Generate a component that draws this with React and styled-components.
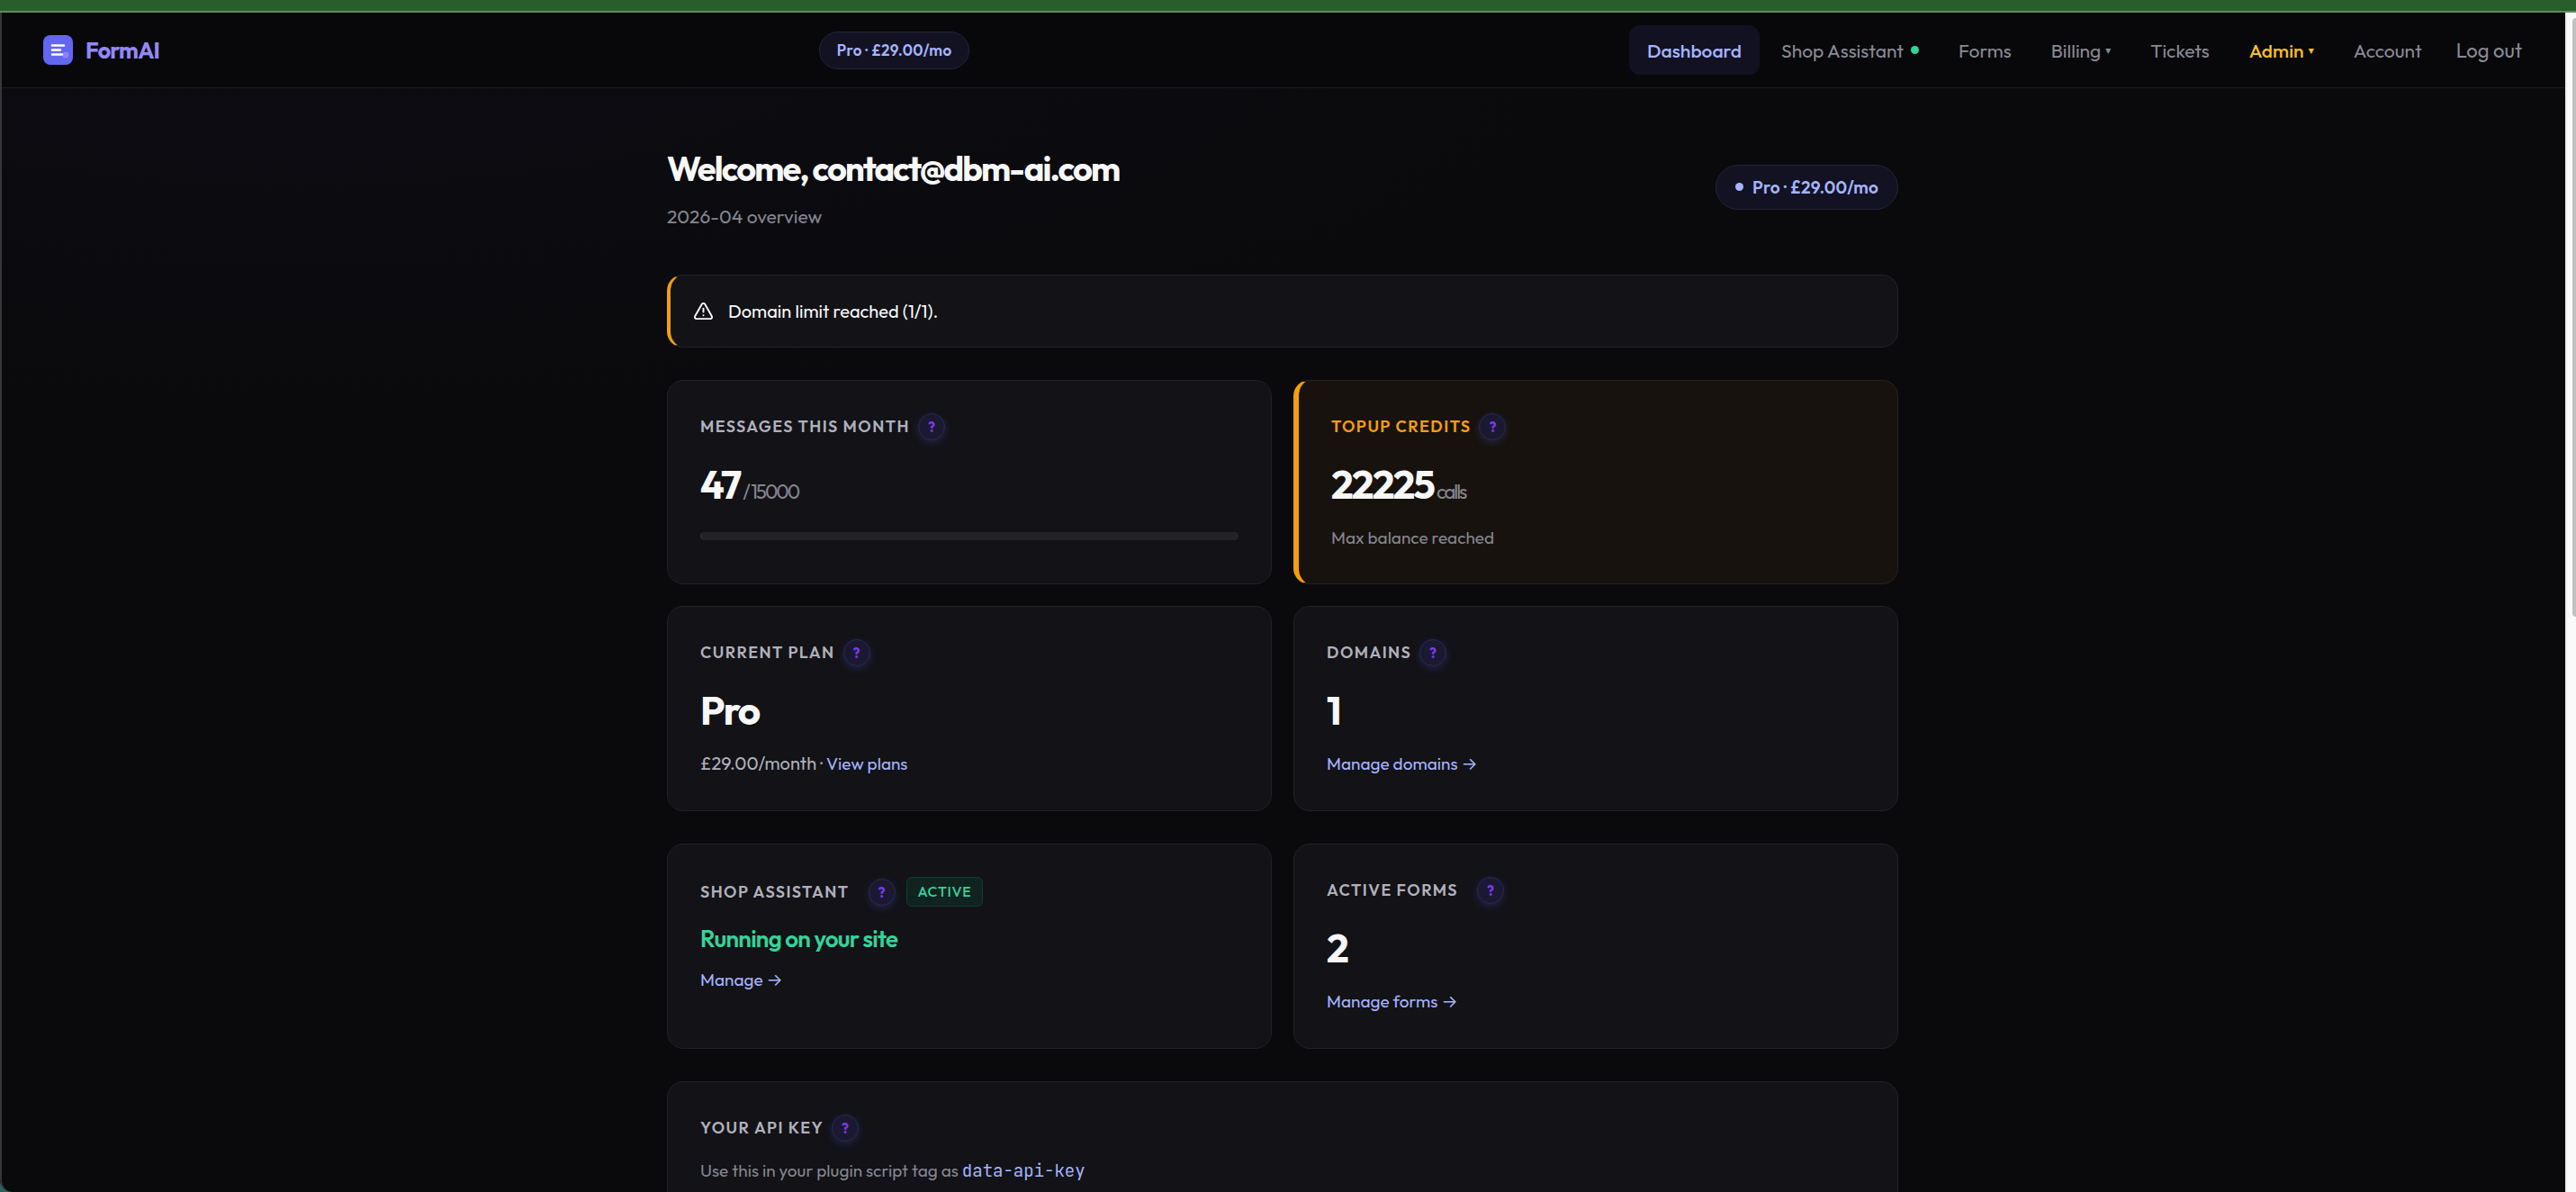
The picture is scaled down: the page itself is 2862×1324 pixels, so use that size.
import React from "react";
import styled, { createGlobalStyle } from "styled-components";
import { TriangleAlert } from "lucide-react";

const sans = `Outfit, Lato, "Liberation Sans", sans-serif`;
const mono = `"JetBrains Mono", "DejaVu Sans Mono", monospace`;

const GlobalStyle = createGlobalStyle`
  *, *::before, *::after { box-sizing: border-box; }
  html, body { margin: 0; background: #0a0a0c; }
  body { font-family: ${sans}; color: #f8f8fa; overflow: hidden; }
  h1, h2, p { margin: 0; }
  a { color: inherit; text-decoration: none; }
  button { font: inherit; color: inherit; cursor: pointer; }
`;

const Screen = styled.div`
  height: 100vh;
  display: grid;
  grid-template: 14px minmax(0, 1fr) / minmax(0, 1fr) 12px;
  background: #2f5f5c;
`;

const TopStrip = styled.div`
  grid-column: 1 / -1;
  background: #285e2b;
  border-bottom: 2px solid #5f8a5f;
`;

const Viewport = styled.div`
  position: relative;
  overflow: hidden;
  border-bottom-left-radius: 14px;
  background: radial-gradient(ellipse 1500px 460px at 12% 0, #0d0c13, #0a0a0c);

  &::after {
    content: "";
    position: absolute;
    inset: 0;
    border-left: 2px solid #37373a;
    border-bottom-left-radius: 14px;
    pointer-events: none;
  }
`;

const ScrollTrack = styled.div`
  background: #fafafa;
  border-left: 2px solid #ececec;
  padding: 6px 0 0 6px;
`;

const ScrollThumb = styled.div`
  height: 51%;
  background: #c1c1c1;
  border-radius: 8px 0 0 8px;
`;

const TopNav = styled.header`
  height: 84px;
  display: flex;
  align-items: center;
  justify-content: space-between;
  padding: 0 48px;
  background: #08080b;
  border-bottom: 1px solid #1c1c20;
`;

const Brand = styled.a`
  display: flex;
  align-items: center;
  gap: 14px;
  font-size: 25px;
  font-weight: 700;
  letter-spacing: -0.03em;
  color: #9288f4;
`;

const Pill = styled.span`
  display: inline-flex;
  align-items: center;
  gap: 10px;
  height: ${(p) => (p.$large ? 50 : 42)}px;
  padding: 0 ${(p) => (p.$large ? 21 : 19)}px;
  border: 1px solid #25243a;
  border-radius: 25px;
  background: #131223;
  color: #a5b4fc;
  font-size: ${(p) => (p.$large ? 19 : 17)}px;
  font-weight: 600;
  letter-spacing: ${(p) => (p.$large ? "0.01em" : "0.02em")};
  white-space: nowrap;
`;

const Dot = styled.span`
  width: 9px;
  height: 9px;
  border-radius: 50%;
  background: ${(p) => p.$color};
`;

const NavLinks = styled.nav`
  display: flex;
  align-items: center;
  gap: 4px;
`;

const navColors = { active: "#a5b4fc", admin: "#fbbf24", plain: "#8a8a95" };

const NavLink = styled.a`
  display: flex;
  align-items: center;
  gap: 8px;
  height: 55px;
  padding: 0 20px;
  border-radius: 12px;
  font-size: 21px;
  font-weight: ${(p) => (p.$kind ? 500 : 400)};
  color: ${(p) => navColors[p.$kind || "plain"]};
  background: ${(p) => (p.$kind === "active" ? "#121122" : "transparent")};
  white-space: nowrap;
`;

const MenuButton = styled(NavLink).attrs({ as: "button" })`
  border: 0;
  gap: 5px;
`;

const Caret = styled.span`
  font-family: "DejaVu Sans", sans-serif;
  font-size: 12px;
`;

const LogoutButton = styled.button`
  margin-left: 14px;
  padding: 0;
  border: 0;
  background: none;
  font-size: 22px;
  color: #8a8a95;
`;

const Page = styled.main`
  width: 100%;
  max-width: 1368px;
  margin: 0 auto;
  padding-top: 62px;
`;

const PageHead = styled.div`
  display: flex;
  align-items: center;
  justify-content: space-between;
  margin-bottom: 50px;
`;

const Title = styled.h1`
  font-size: 38px;
  line-height: 54px;
  font-weight: 700;
  letter-spacing: -0.05em;
`;

const Subtitle = styled.p`
  margin-top: 11px;
  font-size: 21px;
  line-height: 30px;
  color: #85858f;
`;

const Alert = styled.div`
  display: flex;
  align-items: center;
  gap: 16px;
  height: 81px;
  padding: 0 25px;
  margin-bottom: 36px;
  border: 1px solid #222226;
  border-left: 4px solid #f59e0b;
  border-radius: 18px;
  background: #121217;
  font-size: 20px;
`;

const CardGrid = styled.section`
  display: grid;
  grid-template-columns: repeat(2, minmax(0, 1fr));
  gap: 24px;
  margin-bottom: 36px;
`;

const Card = styled.article`
  min-height: 227px;
  padding: 36px;
  border: 1px solid #222226;
  border-radius: 18px;
  background: #121217;
  ${(p) =>
    p.$highlight &&
    `
    border-color: #25221c;
    border-left: 6px solid #f59e0b;
    background: #17120d;
  `}
`;

const LabelRow = styled.div`
  display: flex;
  align-items: center;
  min-height: 30px;
  gap: ${(p) => (p.$wide ? 21 : 9)}px;
`;

const Label = styled.h2`
  font-size: 18px;
  line-height: 30px;
  font-weight: 600;
  letter-spacing: 0.08em;
  text-transform: uppercase;
  color: ${(p) => (p.$accent ? "#f59e0b" : "#b0b0ba")};
`;

const LabelTools = styled.div`
  display: flex;
  align-items: center;
  gap: 12px;
`;

const HelpButton = styled.button`
  width: 30px;
  height: 30px;
  padding: 0;
  border: 1px solid #2b2850;
  border-radius: 50%;
  background: #1b1932;
  box-shadow: 0 3px 10px rgba(99, 102, 241, 0.22);
  color: #7c3aed;
  font-size: 16px;
  font-weight: 700;
`;

const Badge = styled.span`
  height: 33px;
  padding: 0 12px;
  border: 1px solid #123d33;
  border-radius: 6px;
  background: #10231f;
  color: #34d399;
  font-size: 16px;
  line-height: 31px;
  font-weight: 500;
  letter-spacing: 0.04em;
`;

const Value = styled.p`
  margin-top: 22px;
  font-size: 44px;
  line-height: 54px;
  font-weight: 700;
  letter-spacing: -2px;
`;

const Unit = styled.span`
  margin-left: 3px;
  font-size: 22px;
  line-height: 22px;
  font-weight: 400;
  color: #85858f;
`;

const Status = styled.p`
  margin-top: 18px;
  font-size: 26px;
  line-height: 36px;
  font-weight: 600;
  letter-spacing: -0.03em;
  color: #34d399;
`;

const Note = styled.p`
  margin-top: ${(p) => (p.$tight ? 12 : 17)}px;
  font-size: ${(p) => (p.$muted ? 19 : 20)}px;
  line-height: 30px;
  color: ${(p) => (p.$muted ? "#85858f" : "#b0b0ba")};
`;

const TextLink = styled.a`
  font-size: 19px;
  color: #a5b4fc;
`;

const Arrow = styled.span`
  font-family: Inter, sans-serif;
`;

const Code = styled.code`
  font-family: ${mono};
  font-size: 19px;
  color: #a5b4fc;
`;

const Meter = styled.progress`
  display: block;
  width: 100%;
  height: 9px;
  margin-top: 26px;
  appearance: none;
  border: 0;
  border-radius: 5px;
  overflow: hidden;
  background: #232327;
  &::-webkit-progress-bar { background: #232327; }
  &::-webkit-progress-value { background: #2b2b36; }
`;

function Logo() {
  return (
    <svg width="33" height="33" viewBox="0 0 33 33" aria-hidden="true">
      <rect width="33" height="33" rx="8" fill="#6366f1" />
      <circle cx="25" cy="22" r="3.5" fill="#a78bfa" opacity="0.7" />
      <path d="M10 11.5H23M10 16.5H19M10 21.5H21" stroke="#fff" strokeWidth="2.5" strokeLinecap="round" />
    </svg>
  );
}

const Help = ({ topic }) => <HelpButton type="button" aria-label={`Help: ${topic}`}>?</HelpButton>;

function CardLabel({ children, accent, wide, badge }) {
  return (
    <LabelRow $wide={wide}>
      <Label $accent={accent}>{children}</Label>
      <LabelTools>
        <Help topic={children} />
        {badge && <Badge>{badge}</Badge>}
      </LabelTools>
    </LabelRow>
  );
}

export default function App() {
  return (
    <Screen>
      <GlobalStyle />
      <TopStrip />
      <Viewport>
        <TopNav>
          <Brand href="#home"><Logo />FormAI</Brand>
          <Pill>Pro · £29.00/mo</Pill>
          <NavLinks>
            <NavLink href="#dashboard" $kind="active">Dashboard</NavLink>
            <NavLink href="#assistant">Shop Assistant<Dot $color="#34d399" /></NavLink>
            <NavLink href="#forms">Forms</NavLink>
            <MenuButton type="button">Billing<Caret>▾</Caret></MenuButton>
            <NavLink href="#tickets">Tickets</NavLink>
            <MenuButton type="button" $kind="admin">Admin<Caret>▾</Caret></MenuButton>
            <NavLink href="#account">Account</NavLink>
            <LogoutButton type="button">Log out</LogoutButton>
          </NavLinks>
        </TopNav>
        <Page>
          <PageHead>
            <div>
              <Title>Welcome, contact@dbm-ai.com</Title>
              <Subtitle>2026-04 overview</Subtitle>
            </div>
            <Pill $large><Dot $color="#a5b4fc" />Pro · £29.00/mo</Pill>
          </PageHead>
          <Alert role="status">
            <TriangleAlert size={23} strokeWidth={2} aria-hidden="true" />
            Domain limit reached (1/1).
          </Alert>
          <CardGrid>
            <Card>
              <CardLabel>Messages this month</CardLabel>
              <Value>47<Unit>/ 15000</Unit></Value>
              <Meter value={47} max={15000} aria-label="Messages used" />
            </Card>
            <Card $highlight>
              <CardLabel accent>Topup credits</CardLabel>
              <Value>22225<Unit>calls</Unit></Value>
              <Note $muted>Max balance reached</Note>
            </Card>
            <Card>
              <CardLabel>Current plan</CardLabel>
              <Value>Pro</Value>
              <Note>£29.00/month · <TextLink href="#plans">View plans</TextLink></Note>
            </Card>
            <Card>
              <CardLabel>Domains</CardLabel>
              <Value>1</Value>
              <Note><TextLink href="#domains">Manage domains <Arrow>→</Arrow></TextLink></Note>
            </Card>
          </CardGrid>
          <CardGrid>
            <Card>
              <CardLabel wide badge="ACTIVE">Shop Assistant</CardLabel>
              <Status>Running on your site</Status>
              <Note $tight><TextLink href="#assistant">Manage <Arrow>→</Arrow></TextLink></Note>
            </Card>
            <Card>
              <CardLabel wide>Active forms</CardLabel>
              <Value>2</Value>
              <Note><TextLink href="#forms">Manage forms <Arrow>→</Arrow></TextLink></Note>
            </Card>
          </CardGrid>
          <Card>
            <CardLabel>Your API key</CardLabel>
            <Note $muted>Use this in your plugin script tag as <Code>data-api-key</Code></Note>
          </Card>
        </Page>
      </Viewport>
      <ScrollTrack><ScrollThumb /></ScrollTrack>
    </Screen>
  );
}
